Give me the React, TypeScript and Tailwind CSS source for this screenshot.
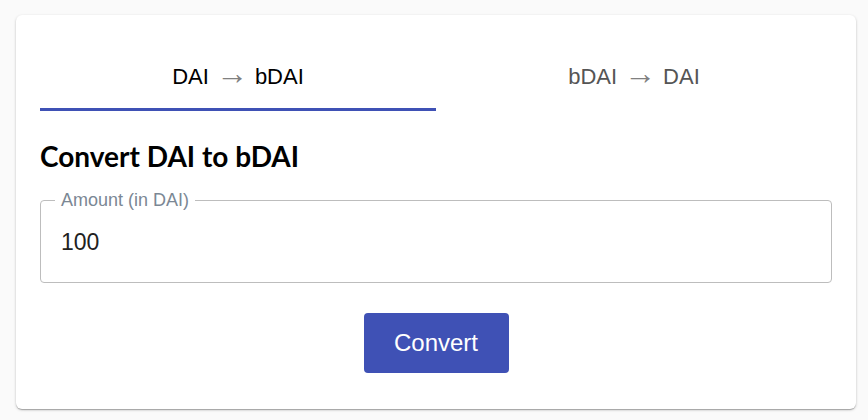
import { useState } from "react";

const tabs = [
  ["DAI", "bDAI"],
  ["bDAI", "DAI"],
];

export default function App() {
  const [active, setActive] = useState(0);
  const [amount, setAmount] = useState("100");

  return (
    <div className="min-h-[420px] w-[868px] bg-[#fafafa] px-4 pt-[15px] font-['Liberation_Sans',Arial,sans-serif]">
      <div className="w-[840px] h-[394px] rounded-md bg-white shadow-[0_1px_3px_rgba(0,0,0,0.2),0_1px_1px_rgba(0,0,0,0.14),0_2px_1px_-1px_rgba(0,0,0,0.12)] px-6 pt-6">
        {/* tabs */}
        <div className="flex">
          {tabs.map(([from, to], i) => (
            <button
              key={from}
              onClick={() => setActive(i)}
              className={`flex-1 h-[72px] pt-[5px] flex items-center justify-center text-[22px] border-b-[3px] ${
                active === i ? "text-black border-[#3f51b5]" : "text-[#555555] border-transparent"
              }`}
            >
              {from}
              <span className="mx-[7px] pb-[7px] text-[32px] leading-none text-[#808080]">→</span>
              {to}
            </button>
          ))}
        </div>

        <h2 className="mt-[28px] text-[28px] leading-[34px] font-bold text-black font-['Lato',sans-serif]">
          Convert DAI to bDAI
        </h2>

        {/* amount field */}
        <fieldset className="mt-[18px] h-[92px] border border-[#bdbdbd] rounded px-[14px]">
          <legend className="px-[6px] text-[18px] leading-[18px] text-[#7b8794]">Amount (in DAI)</legend>
          <input
            value={amount}
            onChange={(e) => setAmount(e.target.value)}
            className="w-full mt-[16px] px-[6px] text-[23px] text-[#212121] outline-none bg-transparent"
          />
        </fieldset>

        <div className="flex justify-center mt-[30px]">
          <button className="w-[145px] h-[60px] rounded bg-[#3f51b5] text-white text-[24px]">Convert</button>
        </div>
      </div>
    </div>
  );
}
